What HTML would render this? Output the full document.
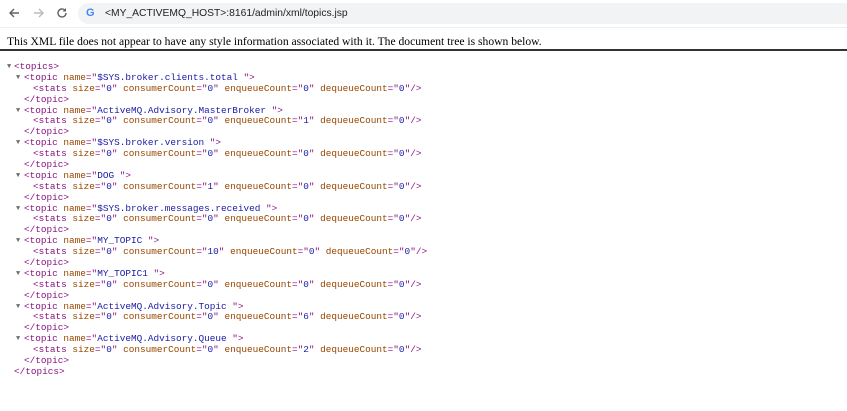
<!DOCTYPE html>
<html><head><meta charset="utf-8"><style>
body{margin:0;width:847px;height:411px;background:#fff;overflow:hidden;position:relative}
.bar{position:absolute;left:0;top:0;width:847px;height:27px;background:#fff;border-bottom:1px solid #eee}
.pill{position:absolute;left:78px;top:3px;width:780px;height:21px;border-radius:11px;background:#f1f3f4}
.url{position:absolute;left:105px;top:8px;font:10.3px "Liberation Sans",sans-serif;color:#222}
.g{position:absolute;left:86px;top:7px;font:bold 11px "Liberation Sans",sans-serif;color:#4285f4}
.msg{position:absolute;left:7px;top:35px;font:11.6px "Liberation Serif",serif;color:#000}
.hr{position:absolute;left:0;top:49px;width:847px;height:2px;background:#333}
.tree{position:absolute;left:0;top:62px;font:9.4px "Liberation Mono",monospace;color:#000}
.tree div{height:10.9px;line-height:10.9px;position:relative;white-space:pre}
.l0{padding-left:14px}.l1{padding-left:24px}.l2{padding-left:33px}
.tri{position:absolute;color:#6e6e6e;font-size:7px}
.l0 .tri{left:7px}.l1 .tri{left:16px}
.t{color:#881280}.a{color:#994500}.v{color:#1a1aa6}
</style></head><body>
<div class="bar">
<svg style="position:absolute;left:8px;top:7px" width="12" height="12" viewBox="0 0 12 12"><path d="M11 6H2M6 2L2 6l4 4" stroke="#5f6368" stroke-width="1.4" fill="none"/></svg>
<svg style="position:absolute;left:33px;top:7px" width="12" height="12" viewBox="0 0 12 12"><path d="M1 6h9M6 2l4 4-4 4" stroke="#bbb" stroke-width="1.4" fill="none"/></svg>
<svg style="position:absolute;left:56px;top:7px" width="12" height="12" viewBox="0 0 12 12"><path d="M10 6a4 4 0 1 1-1.2-2.9" stroke="#5f6368" stroke-width="1.4" fill="none"/><path d="M10 1v3.5H6.5z" fill="#5f6368"/></svg>
<div class="pill"></div><span class="g">G</span><span class="url">&lt;MY_ACTIVEMQ_HOST&gt;:8161/admin/xml/topics.jsp</span>
</div>
<div class="msg">This XML file does not appear to have any style information associated with it. The document tree is shown below.</div>
<div class="hr"></div>
<div class="tree"><div class="l0"><span class="tri">▼</span><span class="t">&lt;topics&gt;</span></div><div class="l1"><span class="tri">▼</span><span class="t">&lt;topic</span> <span class="a">name</span><span class="t">="</span><span class="v">$SYS.broker.clients.total </span><span class="t">"&gt;</span></div><div class="l2"><span class="t">&lt;stats</span> <span class="a">size</span><span class="t">="</span><span class="v">0</span><span class="t">"</span> <span class="a">consumerCount</span><span class="t">="</span><span class="v">0</span><span class="t">"</span> <span class="a">enqueueCount</span><span class="t">="</span><span class="v">0</span><span class="t">"</span> <span class="a">dequeueCount</span><span class="t">="</span><span class="v">0</span><span class="t">"/&gt;</span></div><div class="l1"><span class="t">&lt;/topic&gt;</span></div><div class="l1"><span class="tri">▼</span><span class="t">&lt;topic</span> <span class="a">name</span><span class="t">="</span><span class="v">ActiveMQ.Advisory.MasterBroker </span><span class="t">"&gt;</span></div><div class="l2"><span class="t">&lt;stats</span> <span class="a">size</span><span class="t">="</span><span class="v">0</span><span class="t">"</span> <span class="a">consumerCount</span><span class="t">="</span><span class="v">0</span><span class="t">"</span> <span class="a">enqueueCount</span><span class="t">="</span><span class="v">1</span><span class="t">"</span> <span class="a">dequeueCount</span><span class="t">="</span><span class="v">0</span><span class="t">"/&gt;</span></div><div class="l1"><span class="t">&lt;/topic&gt;</span></div><div class="l1"><span class="tri">▼</span><span class="t">&lt;topic</span> <span class="a">name</span><span class="t">="</span><span class="v">$SYS.broker.version </span><span class="t">"&gt;</span></div><div class="l2"><span class="t">&lt;stats</span> <span class="a">size</span><span class="t">="</span><span class="v">0</span><span class="t">"</span> <span class="a">consumerCount</span><span class="t">="</span><span class="v">0</span><span class="t">"</span> <span class="a">enqueueCount</span><span class="t">="</span><span class="v">0</span><span class="t">"</span> <span class="a">dequeueCount</span><span class="t">="</span><span class="v">0</span><span class="t">"/&gt;</span></div><div class="l1"><span class="t">&lt;/topic&gt;</span></div><div class="l1"><span class="tri">▼</span><span class="t">&lt;topic</span> <span class="a">name</span><span class="t">="</span><span class="v">DOG </span><span class="t">"&gt;</span></div><div class="l2"><span class="t">&lt;stats</span> <span class="a">size</span><span class="t">="</span><span class="v">0</span><span class="t">"</span> <span class="a">consumerCount</span><span class="t">="</span><span class="v">1</span><span class="t">"</span> <span class="a">enqueueCount</span><span class="t">="</span><span class="v">0</span><span class="t">"</span> <span class="a">dequeueCount</span><span class="t">="</span><span class="v">0</span><span class="t">"/&gt;</span></div><div class="l1"><span class="t">&lt;/topic&gt;</span></div><div class="l1"><span class="tri">▼</span><span class="t">&lt;topic</span> <span class="a">name</span><span class="t">="</span><span class="v">$SYS.broker.messages.received </span><span class="t">"&gt;</span></div><div class="l2"><span class="t">&lt;stats</span> <span class="a">size</span><span class="t">="</span><span class="v">0</span><span class="t">"</span> <span class="a">consumerCount</span><span class="t">="</span><span class="v">0</span><span class="t">"</span> <span class="a">enqueueCount</span><span class="t">="</span><span class="v">0</span><span class="t">"</span> <span class="a">dequeueCount</span><span class="t">="</span><span class="v">0</span><span class="t">"/&gt;</span></div><div class="l1"><span class="t">&lt;/topic&gt;</span></div><div class="l1"><span class="tri">▼</span><span class="t">&lt;topic</span> <span class="a">name</span><span class="t">="</span><span class="v">MY_TOPIC </span><span class="t">"&gt;</span></div><div class="l2"><span class="t">&lt;stats</span> <span class="a">size</span><span class="t">="</span><span class="v">0</span><span class="t">"</span> <span class="a">consumerCount</span><span class="t">="</span><span class="v">10</span><span class="t">"</span> <span class="a">enqueueCount</span><span class="t">="</span><span class="v">0</span><span class="t">"</span> <span class="a">dequeueCount</span><span class="t">="</span><span class="v">0</span><span class="t">"/&gt;</span></div><div class="l1"><span class="t">&lt;/topic&gt;</span></div><div class="l1"><span class="tri">▼</span><span class="t">&lt;topic</span> <span class="a">name</span><span class="t">="</span><span class="v">MY_TOPIC1 </span><span class="t">"&gt;</span></div><div class="l2"><span class="t">&lt;stats</span> <span class="a">size</span><span class="t">="</span><span class="v">0</span><span class="t">"</span> <span class="a">consumerCount</span><span class="t">="</span><span class="v">0</span><span class="t">"</span> <span class="a">enqueueCount</span><span class="t">="</span><span class="v">0</span><span class="t">"</span> <span class="a">dequeueCount</span><span class="t">="</span><span class="v">0</span><span class="t">"/&gt;</span></div><div class="l1"><span class="t">&lt;/topic&gt;</span></div><div class="l1"><span class="tri">▼</span><span class="t">&lt;topic</span> <span class="a">name</span><span class="t">="</span><span class="v">ActiveMQ.Advisory.Topic </span><span class="t">"&gt;</span></div><div class="l2"><span class="t">&lt;stats</span> <span class="a">size</span><span class="t">="</span><span class="v">0</span><span class="t">"</span> <span class="a">consumerCount</span><span class="t">="</span><span class="v">0</span><span class="t">"</span> <span class="a">enqueueCount</span><span class="t">="</span><span class="v">6</span><span class="t">"</span> <span class="a">dequeueCount</span><span class="t">="</span><span class="v">0</span><span class="t">"/&gt;</span></div><div class="l1"><span class="t">&lt;/topic&gt;</span></div><div class="l1"><span class="tri">▼</span><span class="t">&lt;topic</span> <span class="a">name</span><span class="t">="</span><span class="v">ActiveMQ.Advisory.Queue </span><span class="t">"&gt;</span></div><div class="l2"><span class="t">&lt;stats</span> <span class="a">size</span><span class="t">="</span><span class="v">0</span><span class="t">"</span> <span class="a">consumerCount</span><span class="t">="</span><span class="v">0</span><span class="t">"</span> <span class="a">enqueueCount</span><span class="t">="</span><span class="v">2</span><span class="t">"</span> <span class="a">dequeueCount</span><span class="t">="</span><span class="v">0</span><span class="t">"/&gt;</span></div><div class="l1"><span class="t">&lt;/topic&gt;</span></div><div class="l0"><span class="t">&lt;/topics&gt;</span></div></div>
</body></html>
